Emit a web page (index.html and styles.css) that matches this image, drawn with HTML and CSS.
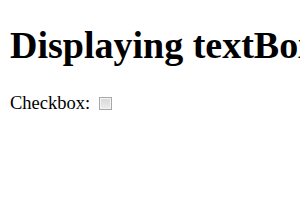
FILE: index.html
```
<!DOCTYPE html>
<html>
<head>
<link rel="stylesheet" href="styles.css">
</head>
<body>
<h1 class="title">Displaying textBox</h1>
<p class="row">Checkbox: <input type="checkbox" class="box"></p>
</body>
</html>
```
FILE: styles.css
```
html, body { overflow: hidden; }
body { font-family: "Liberation Serif", serif; margin: 0; padding: 0 10px; background: #fff; color: #000; }
.title { white-space: nowrap; font-size: 38px; font-weight: bold; margin: 23px 0 26px; }
.row { font-size: 18.5px; margin: 0; display: flex; align-items: center; }
.box {
  -webkit-appearance: none;
  appearance: none;
  width: 13px;
  height: 13px;
  margin: 0 0 0 9px;
  border: 1px solid #a8a8a8;
  background: linear-gradient(#d8d8d8, #ececec);
  box-shadow: inset 0 0 0 1px #f4f4f4;
  box-sizing: border-box;
}
```
